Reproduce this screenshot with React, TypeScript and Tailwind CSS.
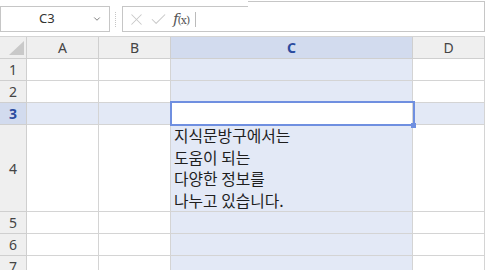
import React from 'react';
import { ChevronDown, X, Check } from 'lucide-react';

const cols = ['A', 'B', 'C', 'D'];
const rows = [1, 2, 3, 4, 5, 6, 7];

const lines = ['지식문방구에서는', '도움이 되는', '다양한 정보를', '나누고 있습니다.'];

const Cell: React.FC<{ row: number; col: string }> = ({ row, col }) => {
  const active = row === 3 && col === 'C';
  const hl = !active && (row === 3 || col === 'C');
  return (
    <div
      className={`relative border-r border-b border-[#d4d4d4] ${active ? 'bg-white' : hl ? 'bg-[#e3e9f6]' : 'bg-white'}`}
    >
      {/* selected cell frame + fill handle */}
      {active && (
        <>
          <div className="absolute left-[-1px] top-[-2px] z-10 h-[25px] w-[245px] border-2 border-[#6f8fe0]" />
          <div className="absolute left-[240px] top-[20px] z-20 h-[5px] w-[5px] bg-[#6f8fe0]" />
        </>
      )}
      {row === 4 && col === 'C' && (
        <div className="pl-[3px] font-['Malgun_Gothic','Noto_Sans_CJK_KR',sans-serif] text-[15.8px] leading-[21.6px] text-[#1e1e1e]">
          {lines.map((l) => (
            <div key={l}>{l}</div>
          ))}
        </div>
      )}
    </div>
  );
};

export default function App() {
  return (
    <div className="h-[270px] w-[485px] overflow-hidden bg-white font-['Segoe_UI','Noto_Sans',sans-serif] text-[#444]">
      {/* Name box + formula bar */}
      <div className="flex h-[36px] items-start">
        <div className="mt-[6px] flex h-[26px] w-[110px] items-center border border-[#c6c6c6] pl-[38px] pr-[7px]">
          <span className="flex-1 text-[13px] text-[#333]">C3</span>
          <ChevronDown size={10} strokeWidth={2} className="text-[#666]" />
        </div>
        <div className="ml-[5px] mt-[12px] h-[15px] border-l border-dotted border-[#c6c6c6]" />
        <div className="ml-[6px] mt-[6px] flex h-[26px] w-[126px] items-center border-y border-l border-[#c6c6c6] pl-[4px]">
          <X size={19} strokeWidth={1.3} className="text-[#c8c8c8]" />
          <Check size={19} strokeWidth={1.3} className="ml-[3px] text-[#c8c8c8]" />
          <span className="ml-[5px] font-['DejaVu_Serif',serif] text-[15px] italic tracking-[-1px] text-[#555]">
            f<span className="text-[11px] not-italic">(x)</span>
          </span>
          <div className="ml-[6px] h-[15px] w-px bg-[#bbb]" />
        </div>
        <div className="mt-px h-[31px] flex-1 border-y border-r border-[#c6c6c6]" />
      </div>

      {/* Grid */}
      <div className="grid grid-cols-[27px_72px_72px_242px_1fr] grid-rows-[22px_22px_22px_22px_87px_22px_22px_22px] border-t border-[#d4d4d4]">
        <div className="flex items-end justify-end border-r border-b border-[#cfcfcf] bg-[#efefef] pb-[3px] pr-[2px]">
          <svg width="15" height="14" viewBox="0 0 15 14">
            <polygon points="15,0 15,14 0,14" fill="#c9c9c9" />
          </svg>
        </div>
        {cols.map((c) => (
          <div
            key={c}
            className={`flex items-center justify-center border-r border-b border-[#cfcfcf] text-[14px] ${
              c === 'C' ? 'bg-[#d2dbee] font-bold text-[#2b4b9f]' : 'bg-[#efefef] text-[#444]'
            }`}
          >
            {c}
          </div>
        ))}
        {rows.map((r) => (
          <React.Fragment key={r}>
            <div
              className={`flex items-center justify-center border-r border-b border-[#cfcfcf] text-[14px] ${
                r === 3 ? 'bg-[#d2dbee] font-bold text-[#2b4b9f]' : 'bg-[#efefef] text-[#444]'
              }`}
            >
              {r}
            </div>
            {cols.map((c) => (
              <Cell key={c} row={r} col={c} />
            ))}
          </React.Fragment>
        ))}
      </div>
    </div>
  );
}
